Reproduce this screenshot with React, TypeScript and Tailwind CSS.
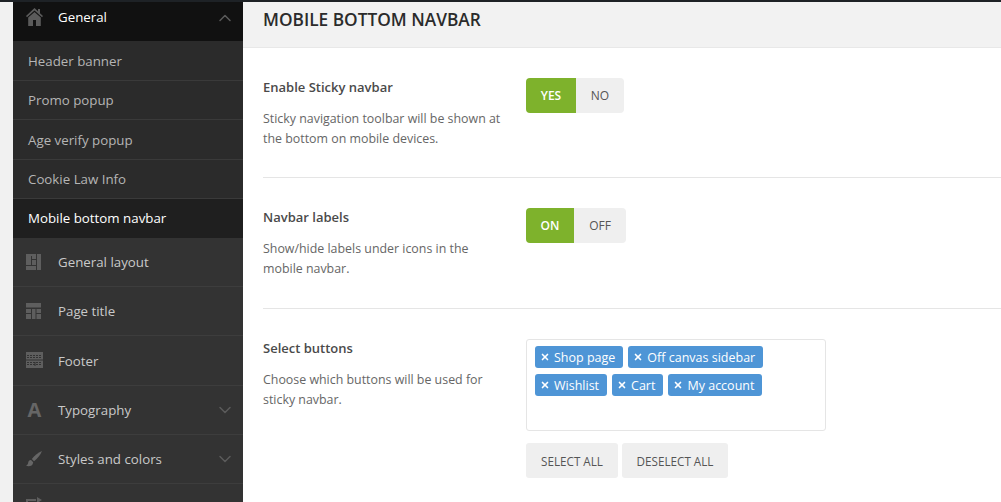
import React from 'react';
import { ChevronDown, ChevronUp, X } from 'lucide-react';

const font = { fontFamily: '"Open Sans", sans-serif' };

function Home() {
  return (
    <svg width="17" height="18" viewBox="0 0 17 18" fill="#5b5b5b">
      <path d="M8.5 0 L0 8 L1 9.2 L8.5 2.4 L16 9.2 L17 8 L14 5.2 V1 H12 V3.3 Z" />
      <path fillRule="evenodd" d="M2.2 9.6 L8.5 3.9 L14.8 9.6 V18 H2.2 Z M7 12 V18 H10 V12 Z" />
    </svg>
  );
}

function LayoutIcon() {
  return (
    <svg width="15" height="16" viewBox="0 0 15 16">
      <rect width="15" height="16" fill="#5e5e5e" />
      <path d="M10.5 0V16M0 11.5H10.5M5.5 2V11.5M5.5 5.5H10.5" stroke="#333" strokeWidth="1" fill="none" />
    </svg>
  );
}

function TitleIcon() {
  return (
    <svg width="15" height="16" viewBox="0 0 15 16" fill="#5e5e5e">
      <path d="M0 0H15V4.5H0ZM0 6H5V10H0ZM6 6H9.5V16H6ZM10.5 6H15V10H10.5ZM0 11H5V16H0ZM10.5 11H15V16H10.5Z" />
    </svg>
  );
}

function FooterIcon() {
  return (
    <svg width="17" height="16" viewBox="0 0 17 16">
      <rect width="17" height="16" fill="#5e5e5e" />
      <path d="M1 3.5H16M1 5.5H16M1 10.5H16M1 12.5H16" stroke="#333" strokeWidth="1" strokeDasharray="2 1" fill="none" />
      <path d="M0 8H17M9 10V14" stroke="#333" strokeWidth="1" fill="none" />
    </svg>
  );
}

function BrushIcon() {
  return (
    <svg width="16" height="16" viewBox="0 0 16 16" fill="#666">
      <path d="M16 0 C12 1.5 8 5 5.8 8 L8 10.2 C11 8 14.5 4 16 0 Z" />
      <path d="M5 9 C2.8 9 2.4 10.5 2 12.5 C1.8 13.6 0.8 14.2 0 14.6 C2 15.8 6.8 15.6 7.2 11.2 Z" />
    </svg>
  );
}

function EditIcon() {
  return (
    <svg width="16" height="22" viewBox="0 0 16 22" fill="#5e5e5e">
      <path d="M0 2H10V4H2V22H0ZM11 0L16 3L11 6Z" />
    </svg>
  );
}

function TypoIcon() {
  return <span className="block w-4 pl-px text-[20px] font-bold leading-none text-[#666] text-center">A</span>;
}

function MenuRow({ icon, label, arrow }: { icon: React.ReactNode; label?: string; arrow?: boolean }) {
  return (
    <div className="h-[49.2px] flex items-center pl-[13px] pr-2 border-b border-[#3d3d3d] text-[13.3px] text-[#c9c9c9]">
      <div className="w-8 flex justify-start">{icon}</div>
      <span className="flex-1 pt-[2px]">{label}</span>
      {arrow && <ChevronDown size={20} color="#5b5b5b" strokeWidth={1.8} />}
    </div>
  );
}

function SubRow({ label, active }: { label: string; active?: boolean }) {
  return (
    <div className={active
      ? 'h-[39px] flex items-center pl-[15px] text-[13.3px] text-white bg-[#1f1f1f]'
      : 'h-[39.5px] flex items-center pl-[15px] pt-[3px] text-[13.3px] text-[#b5b5b5] border-b border-[#3a3a3a]'}>
      {label}
    </div>
  );
}

function Toggle({ on, off, onWidth, offWidth }: { on: string; off: string; onWidth: string; offWidth: string }) {
  return (
    <div className="flex h-[35px] text-[12px] rounded-[4px] overflow-hidden">
      <div className={`${onWidth} bg-[#7eb22c] text-white font-semibold flex items-center justify-center`}>{on}</div>
      <div className={`${offWidth} bg-[#efefef] text-[#555] font-medium flex items-center justify-center`}>{off}</div>
    </div>
  );
}

function Tag({ label }: { label: string }) {
  return (
    <span className="h-[22px] flex items-center gap-1 pl-[5px] pr-2 pt-[2px] bg-[#4e95d6] text-white text-[12.5px] rounded-[3px]">
      <X size={10} strokeWidth={4} className="-mt-[2px]" />
      {label}
    </span>
  );
}

function Setting({ title, desc, children, height }: { title: string; desc: React.ReactNode; children: React.ReactNode; height: string }) {
  return (
    <div className={`${height} flex pt-[30px] border-b border-[#e5e5e5]`}>
      <div className="w-[263px]">
        <div className="-mt-px text-[13px] font-semibold text-[#4a4a4a] leading-[20px]">{title}</div>
        <div className="mt-[12px] text-[12.4px] text-[#666] leading-[20px]">{desc}</div>
      </div>
      <div>{children}</div>
    </div>
  );
}

export default function App() {
  return (
    <div className="w-[1001px] h-[502px] overflow-hidden flex flex-col bg-white" style={font}>
      <div className="h-[2px] bg-[#1e2226] shrink-0" />
      <div className="flex flex-1 min-h-0">
        <div className="w-[13px] bg-[#f1f1f1] shrink-0" />
        {/* Sidebar */}
        <div className="w-[230px] bg-[#333333] shrink-0">
          <div className="h-[39px] flex items-start pt-[6px] pl-[13px] pr-2 bg-[#111111] text-[13.3px] text-white">
            <div className="w-8"><Home /></div>
            <span className="flex-1">General</span>
            <ChevronUp size={20} color="#5b5b5b" strokeWidth={1.8} />
          </div>
          <div className="bg-[#2b2b2b]">
            <SubRow label="Header banner" />
            <SubRow label="Promo popup" />
            <SubRow label="Age verify popup" />
            <SubRow label="Cookie Law Info" />
            <SubRow label="Mobile bottom navbar" active />
          </div>
          <MenuRow icon={<LayoutIcon />} label="General layout" />
          <MenuRow icon={<TitleIcon />} label="Page title" />
          <MenuRow icon={<FooterIcon />} label="Footer" />
          <MenuRow icon={<TypoIcon />} label="Typography" arrow />
          <MenuRow icon={<BrushIcon />} label="Styles and colors" arrow />
          <MenuRow icon={<EditIcon />} />
        </div>
        {/* Main */}
        <div className="flex-1 min-w-0">
          <div className="h-[46px] bg-[#f2f2f2] border-b border-[#e8e8e8] pl-5 pt-[6px]">
            <h1 className="text-[17.3px] font-semibold text-[#2b2b2b] leading-[24px]">MOBILE BOTTOM NAVBAR</h1>
          </div>
          <div className="pl-5">
            <Setting
              height="h-[130px]"
              title="Enable Sticky navbar"
              desc={<>Sticky navigation toolbar will be shown at<br />the bottom on mobile devices.</>}
            >
              <Toggle on="YES" off="NO" onWidth="w-[50px]" offWidth="w-[48px]" />
            </Setting>
            <Setting
              height="h-[131px]"
              title="Navbar labels"
              desc={<>Show/hide labels under icons in the<br />mobile navbar.</>}
            >
              <Toggle on="ON" off="OFF" onWidth="w-[48px]" offWidth="w-[52px]" />
            </Setting>
            <div className="flex pt-[30px]">
              <div className="w-[263px]">
                <div className="-mt-px text-[13px] font-semibold text-[#4a4a4a] leading-[20px]">Select buttons</div>
                <div className="mt-[12px] text-[12.4px] text-[#666] leading-[20px]">Choose which buttons will be used for<br />sticky navbar.</div>
              </div>
              <div>
                <div className="w-[300px] h-[92px] border border-[#e5e5e5] rounded-[3px] pl-2 pt-[6px] flex flex-wrap content-start gap-x-[5px] gap-y-[6px]">
                  <Tag label="Shop page" />
                  <Tag label="Off canvas sidebar" />
                  <Tag label="Wishlist" />
                  <Tag label="Cart" />
                  <Tag label="My account" />
                </div>
                <div className="flex gap-1 mt-3">
                  <div className="w-[92px] h-[35px] bg-[#efefef] rounded-[3px] flex items-center justify-center pt-[2px] text-[11.7px] text-[#555]">SELECT ALL</div>
                  <div className="w-[106px] h-[35px] bg-[#efefef] rounded-[3px] flex items-center justify-center pt-[2px] text-[11.7px] text-[#555]">DESELECT ALL</div>
                </div>
              </div>
            </div>
          </div>
        </div>
      </div>
    </div>
  );
}
